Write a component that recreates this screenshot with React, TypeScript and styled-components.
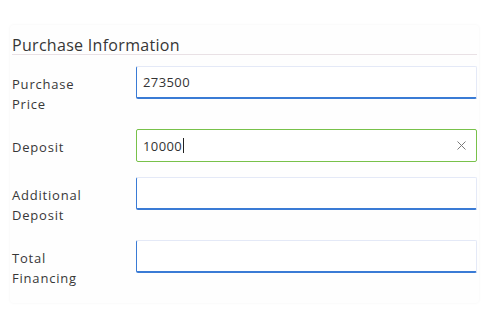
import React from "react";
import styled, { createGlobalStyle } from "styled-components";

const GlobalStyle = createGlobalStyle`
  html, body {
    margin: 0;
    padding: 0;
    background: #ffffff;
  }
  body {
    font-family: "Open Sans", "Noto Sans", sans-serif;
    color: #363636;
  }
`;

const Page = styled.div`
  padding: 25px 20px 20px 10px;
`;

const Card = styled.section`
  width: 469px;
  box-sizing: border-box;
  padding: 11px 2px 15px 2px;
  background: #fefefe;
  border-radius: 4px;
  box-shadow: 0 0 3px rgba(0, 0, 0, 0.05);
`;

const Title = styled.h3`
  margin: 0 0 11px 0;
  font-size: 16px;
  font-weight: 400;
  line-height: 18px;
  color: #363636;
  letter-spacing: 0.3px;
  border-bottom: 1px solid #e9e1e5;
`;

const Form = styled.div`
  display: flex;
  flex-direction: column;
  gap: 15px;
`;

const Row = styled.div`
  display: grid;
  grid-template-columns: 124px 1fr;
  align-items: start;
`;

const Label = styled.label`
  display: block;
  max-width: 86px;
  padding-top: 8px;
  font-size: 13px;
  line-height: 20px;
  letter-spacing: 0.8px;
  color: #383838;
`;

const Field = styled.div<{ $valid?: boolean }>`
  display: flex;
  align-items: center;
  height: 33px;
  box-sizing: border-box;
  padding: 0 10px 0 6px;
  background: #ffffff;
  border-radius: 2px;
  font-size: 13px;
  color: #333;
  border: 1px solid ${({ $valid }) => ($valid ? "#78c14a" : "#e4e9f7")};
  border-left-color: ${({ $valid }) => ($valid ? "#78c14a" : "#3a7bd5")};
  border-bottom: ${({ $valid }) => ($valid ? "1px solid #78c14a" : "2px solid #3a7bd5")};
`;

const Value = styled.span`
  letter-spacing: 0.4px;
`;

const Caret = styled.span`
  display: inline-block;
  width: 1px;
  height: 15px;
  margin-left: 1px;
  background: #222;
`;

const Clear = styled.span`
  display: flex;
  margin-left: auto;
  color: #7a7a7a;
`;

const ClearIcon = () => (
  <svg width="9" height="9" viewBox="0 0 9 9" fill="none">
    <path d="M0.5 0.5L8.5 8.5M8.5 0.5L0.5 8.5" stroke="currentColor" strokeWidth="1" />
  </svg>
);

interface FieldRowProps {
  label: string;
  value?: string;
  active?: boolean;
}

const FieldRow: React.FC<FieldRowProps> = ({ label, value, active }) => (
  <Row>
    <Label>{label}</Label>
    <Field $valid={active}>
      {value && <Value>{value}</Value>}
      {active && <Caret />}
      {active && (
        <Clear>
          <ClearIcon />
        </Clear>
      )}
    </Field>
  </Row>
);

const App: React.FC = () => (
  <>
    <GlobalStyle />
    <Page>
      <Card>
        <Title>Purchase Information</Title>
        <Form>
          <FieldRow label="Purchase Price" value="273500" />
          <FieldRow label="Deposit" value="10000" active />
          <FieldRow label="Additional Deposit" />
          <FieldRow label="Total Financing" />
        </Form>
      </Card>
    </Page>
  </>
);

export default App;
